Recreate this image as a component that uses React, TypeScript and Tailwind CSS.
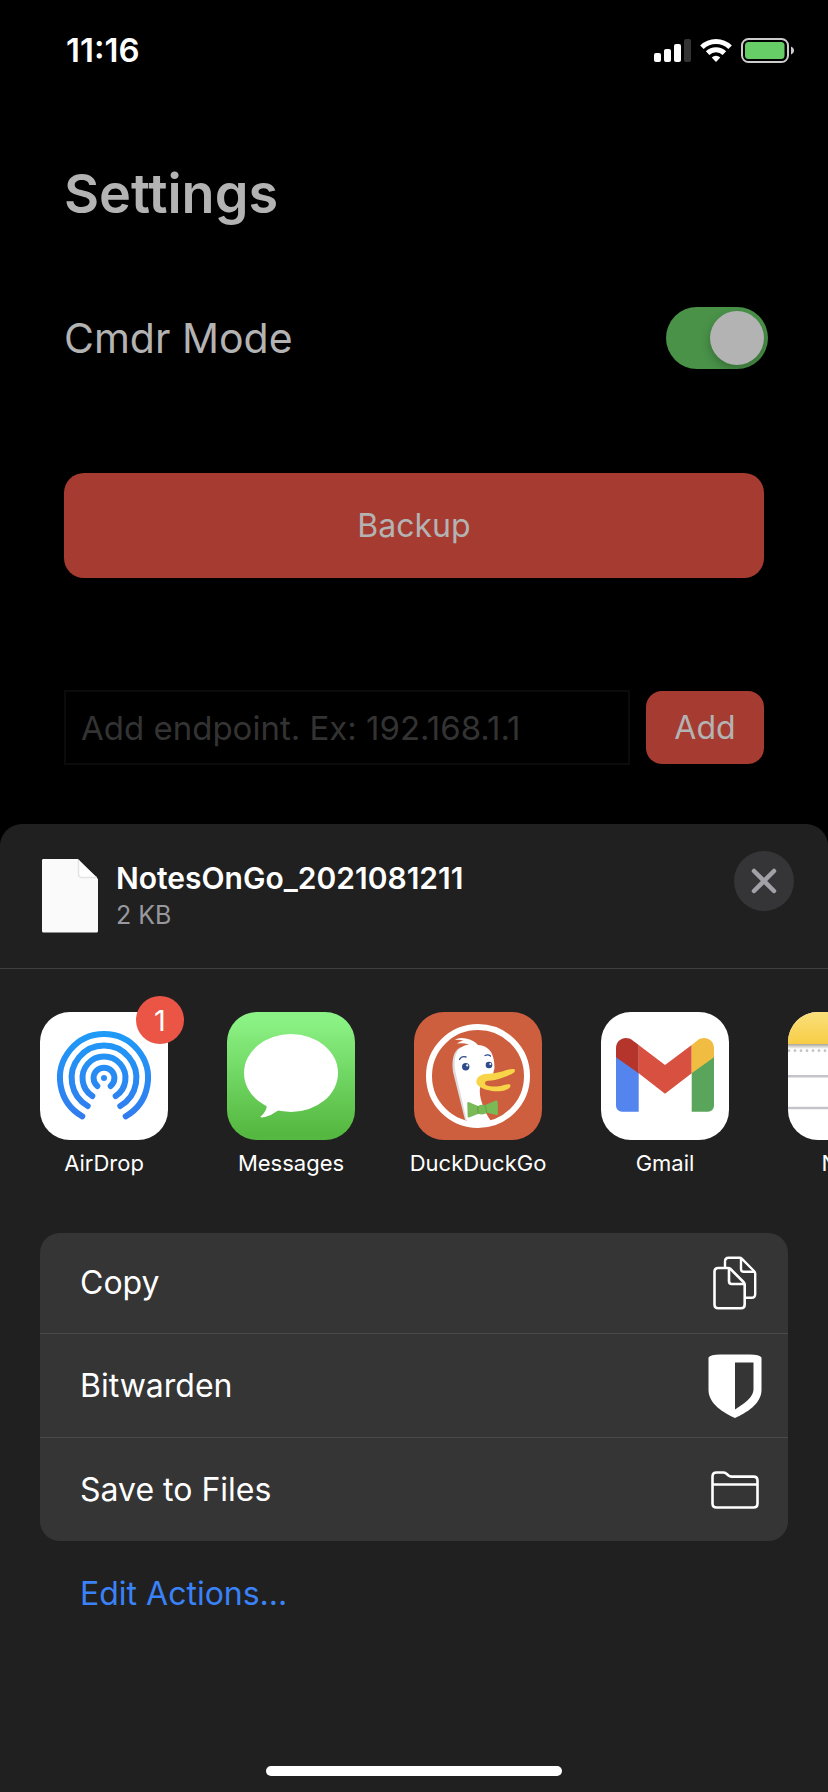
import React from "react";

function SignalIcon() {
  return (
    <svg width="37" height="23" viewBox="0 0 37 23" aria-hidden="true">
      <rect x="0" y="14" width="7" height="9" rx="2" fill="#fff" />
      <rect x="10" y="10" width="7" height="13" rx="2" fill="#fff" />
      <rect x="20" y="5" width="7" height="18" rx="2" fill="#fff" />
      <rect x="30" y="0" width="7" height="23" rx="2" fill="#333" />
    </svg>
  );
}

function WifiIcon() {
  return (
    <svg width="32" height="24" viewBox="0 0 32 24" aria-hidden="true">
      <g fill="none" stroke="#fff" strokeWidth="5">
        <path d="M1.9 9.3A20 20 0 0 1 30.1 9.3" />
        <path d="M7.6 15.1A12 12 0 0 1 24.4 15.1" />
      </g>
      <path d="M16 24L11.7 19.4A6.2 6.2 0 0 1 20.3 19.4Z" fill="#fff" />
    </svg>
  );
}

function BatteryIcon() {
  return (
    <svg width="53" height="25" viewBox="0 0 53 25" aria-hidden="true">
      <rect x="1" y="1" width="46" height="23" rx="6.5" fill="none" stroke="#ccc" strokeWidth="2" />
      <rect x="4" y="4" width="39.500" height="17" rx="3.500" fill="#67ce67" />
      <path d="M50 8.500C54 10 54 15 50 16.500Z" fill="#ccc" />
    </svg>
  );
}

function DocumentIcon() {
  return (
    <svg width="56" height="74" viewBox="0 0 56 74" aria-hidden="true">
      <path d="M2 0H36L56 20V72a1.500 1.500 0 0 1-1.500 1.500H1.500A1.500 1.500 0 0 1 0 72V1.500A1.500 1.500 0 0 1 2 0Z" fill="#fafafa" />
      <path d="M36.500 1V15Q36.500 18.500 40 18.500H55" fill="#fff" stroke="#e4e4e4" strokeWidth="1.500" />
    </svg>
  );
}

function AirDropIcon() {
  return (
    <svg className="h-full w-full" viewBox="0 0 128 128" aria-hidden="true">
      <defs>
        <linearGradient id="airdrop" gradientUnits="userSpaceOnUse" x1="0" y1="19" x2="0" y2="108">
          <stop offset="0" stopColor="#1e9bf8" />
          <stop offset="1" stopColor="#327bee" />
        </linearGradient>
      </defs>
      <rect width="128" height="128" fill="#fff" />
      <g fill="none" stroke="url(#airdrop)" strokeWidth="6" strokeLinecap="round">
        <path d="M42.300 104.300A44 44 0 1 1 85.700 104.300" />
        <path d="M47.700 94A32.400 32.400 0 1 1 80.300 94" />
        <path d="M52.300 84A21.500 21.500 0 1 1 75.700 84" />
        <path d="M57.300 74A10.400 10.400 0 1 1 70.700 74" />
      </g>
      <circle cx="64" cy="66" r="3" fill="#2a8bf3" />
    </svg>
  );
}

function MessagesIcon() {
  return (
    <svg className="h-full w-full" viewBox="0 0 128 128" aria-hidden="true">
      <defs>
        <linearGradient id="messages" x1="0" y1="0" x2="0" y2="1">
          <stop offset="0.050" stopColor="#8bf385" />
          <stop offset="0.950" stopColor="#55b840" />
        </linearGradient>
      </defs>
      <rect width="128" height="128" fill="url(#messages)" />
      <ellipse cx="64" cy="61" rx="47" ry="39" fill="#fff" />
      <path d="M38 91.500Q41 94 38.500 98.500Q36.500 102.500 33.300 104.800Q34 106 38 105Q44 103.500 50.700 98.700L58 96L44 88Z" fill="#fff" />
    </svg>
  );
}

function DuckIcon() {
  return (
    <svg className="h-full w-full" viewBox="0 0 128 128" aria-hidden="true">
      <rect width="128" height="128" fill="#cd5f3e" />
      <path d="M51 108L39 60C37.500 48 39 40 46 35.500L60 34L66 110Z" fill="#dcdcdc" />
      <path
        d="M53 110L41.500 60C39.500 49 41 41 46 36.500Q49.500 33 55 32.500Q49 30.500 43 31.500Q46 28.700 49.500 28.700Q45 27 40.700 28Q45 25 52 26.500Q60 28 64 33Q72 33 77 40Q80.500 46 80.500 56L79 62Q68 66 66 76Q65 82 68 91Q71 101 77 109Q65 115 53 110Z"
        fill="#fff"
      />
      <circle cx="64" cy="64" r="49" fill="none" stroke="#fff" strokeWidth="6" />
      <path
        d="M62.300 70C62.300 65.500 66 62.500 71 61.900C80 61.500 86 60.500 91 58.500C96 56.800 101 56 101 58.500C101 61.500 94 63.600 89 65.500C83 67.800 78 68.800 74 68.800C70.500 69 70 72.500 73 73.500C78 75.500 85 74.500 90 73C94 71.800 96.800 72 96.500 74C96 77 90 79.300 83 79.300C76 79.300 62.500 76 62.300 70Z"
        fill="#f8d548"
      />
      <circle cx="51.700" cy="54.700" r="3.700" fill="#2f4b8c" />
      <circle cx="75" cy="53" r="3.300" fill="#2f4b8c" />
      <circle cx="53.200" cy="53.400" r="1.100" fill="#fff" />
      <circle cx="76.300" cy="51.900" r="1" fill="#fff" />
      <g fill="none" stroke="#2f4b8c" strokeWidth="1.300" strokeLinecap="round">
        <path d="M45.500 47.500Q47.500 43.800 52 45" />
        <path d="M71 43.500Q74 42 76.500 44" />
      </g>
      <path
        d="M54.500 90L64 94Q67.500 92 70.700 93.300L82 88.500Q83.500 88.300 83.700 90L84 101.500Q84 103.200 82.500 103L73 100.700Q69 103.500 64.700 101.700L55 105.500Q53.700 106 53.600 104L53.300 91Q53.500 89.700 54.500 90Z"
        fill="#79ba57"
      />
      <path d="M64 94Q63 98 64.700 101.700M71 93.500Q72.500 97 72.500 100.700" fill="none" stroke="#5f9f42" strokeWidth="1" />
    </svg>
  );
}

function GmailIcon() {
  return (
    <svg className="h-full w-full" viewBox="0 0 128 128" aria-hidden="true">
      <rect width="128" height="128" fill="#fff" />
      <path d="M15 44L37.700 60V99.700H21A6 6 0 0 1 15 93.700Z" fill="#5484ed" />
      <path d="M113 44L90.700 60V99.700H107A6 6 0 0 0 113 93.700Z" fill="#5aa55c" />
      <path d="M37.700 33L64 53L90.700 33V61.300L64 81.700L37.700 61.300Z" fill="#d85040" />
      <path d="M15 45.300V36.500C15 27.500 24.500 23 31.700 28.500L37.700 33V61.300Z" fill="#b5342b" />
      <path d="M113 45.300V36.500C113 27.500 103.500 23 96.300 28.500L90.700 33V61.300Z" fill="#f0bd42" />
    </svg>
  );
}

function NotesIcon() {
  return (
    <svg className="h-full w-full" viewBox="0 0 128 128" aria-hidden="true">
      <defs>
        <linearGradient id="notes" x1="0" y1="0" x2="0" y2="1">
          <stop offset="0" stopColor="#fae07c" />
          <stop offset="1" stopColor="#f7cd45" />
        </linearGradient>
        <linearGradient id="notes-edge" x1="0" y1="0" x2="0" y2="1">
          <stop offset="0" stopColor="#a9a59b" />
          <stop offset="1" stopColor="#fff" />
        </linearGradient>
      </defs>
      <rect width="128" height="128" fill="#fff" />
      <rect width="128" height="32" fill="url(#notes)" />
      <rect y="32" width="128" height="5" fill="url(#notes-edge)" />
      <path d="M1 38.700H128" stroke="#c3c3c3" strokeWidth="2.800" strokeLinecap="round" strokeDasharray="0 6" />
      <path d="M0 64.300H128M0 96H128" stroke="#c5c4c9" strokeWidth="2.400" />
    </svg>
  );
}

function CopyIcon() {
  return (
    <svg width="44" height="54" viewBox="0 0 44 54" fill="none" stroke="#fff" strokeWidth="2.600" strokeLinejoin="round" aria-hidden="true">
      <path d="M12 11V5.500Q12 1.800 15.700 1.800H26.500Q28 1.800 29 2.800L41 15Q42.200 16.200 42.200 17.500V38Q42.200 41.800 38.500 41.800H33" strokeWidth="2.400" />
      <path d="M28 2.500V13Q28 15.800 30.800 15.800H41.500" strokeWidth="2.400" />
      <path d="M5.300 12H15Q16.500 12 17.500 13L30.500 26Q31.700 27.200 31.700 28.500V48.500Q31.700 52.300 28 52.300H5.300Q1.500 52.300 1.500 48.500V15.800Q1.500 12 5.300 12Z" />
      <path d="M16 12.500V25.300Q16 28 18.700 28H31" />
    </svg>
  );
}

function ShieldIcon() {
  return (
    <svg width="54" height="64" viewBox="0 0 54 64" aria-hidden="true">
      <path
        fillRule="evenodd"
        fill="#fff"
        d="M0.500 3.500Q2.500 0.500 12 0.500H42Q51.500 0.500 53.500 3.500V36C53.500 50 38 59 27 64C16 59 0.500 50 0.500 36ZM27 8.500V55.500C36 50 45.500 43 45.500 35.500V8.500Z"
      />
    </svg>
  );
}

function FolderIcon() {
  return (
    <svg width="48" height="38" viewBox="0 0 48 38" fill="none" stroke="#fff" strokeWidth="2.600" strokeLinejoin="round" aria-hidden="true">
      <path d="M1.500 32.500V5.500Q1.500 1.500 5.500 1.500H12Q14 1.500 15.500 2.700L17.500 4.500Q18.800 5.600 20.500 5.600H42.500Q46.500 5.600 46.500 9.600V32.500Q46.500 36.500 42.500 36.500H5.500Q1.500 36.500 1.500 32.500Z" />
      <path d="M2 13.500H46" strokeWidth="2.400" />
    </svg>
  );
}

type Target = { name: string; icon: React.ReactNode; badge?: number };

const targets: Target[] = [
  { name: "AirDrop", icon: <AirDropIcon />, badge: 1 },
  { name: "Messages", icon: <MessagesIcon /> },
  { name: "DuckDuckGo", icon: <DuckIcon /> },
  { name: "Gmail", icon: <GmailIcon /> },
  { name: "Notes", icon: <NotesIcon /> },
];

const actions = [
  { name: "Copy", icon: <CopyIcon /> },
  { name: "Bitwarden", icon: <ShieldIcon /> },
  { name: "Save to Files", icon: <FolderIcon /> },
];

function StatusBar() {
  return (
    <div className="flex h-[100px] items-center justify-between pr-[34px] pl-[66px]">
      <time className="text-[33px] leading-10 font-semibold">11:16</time>
      <div className="flex items-center gap-[9px]">
        <SignalIcon />
        <WifiIcon />
        <BatteryIcon />
      </div>
    </div>
  );
}

function SettingsScreen() {
  return (
    <main className="px-16 text-[#b3b3b3]">
      <h1 className="pt-[54px] text-[54px] leading-20 font-semibold">Settings</h1>
      <div className="-mr-1 flex items-center justify-between pt-[72px]">
        <label htmlFor="cmdr" className="text-[41px] leading-16">
          Cmdr Mode
        </label>
        <input
          id="cmdr"
          type="checkbox"
          role="switch"
          defaultChecked
          className="flex h-[62px] w-[102px] appearance-none items-center rounded-full bg-[#3a3a3c] p-1 before:size-[54px] before:rounded-full before:bg-[#b3b3b3] before:shadow-[0_4px_10px_rgba(0,0,0,0.25)] checked:justify-end checked:bg-[#499248]"
        />
      </div>
      <button type="button" className="mt-[103px] h-[105px] w-full rounded-[20px] bg-[#a63c31] text-[32px]">
        Backup
      </button>
      <form className="mt-28 flex items-center gap-4" onSubmit={(e) => e.preventDefault()}>
        <input
          type="text"
          aria-label="Endpoint address"
          placeholder="Add endpoint. Ex: 192.168.1.1"
          className="h-[75px] min-w-0 flex-1 border-2 border-[#0b0b0b] bg-black px-[15px] text-[33px] placeholder:text-[#333] placeholder:opacity-100"
        />
        <button type="submit" className="h-[73px] w-[118px] rounded-2xl bg-[#a63c31] text-[32px]">
          Add
        </button>
      </form>
    </main>
  );
}

function ShareSheet() {
  return (
    <section aria-label="Share" className="mt-[59px] flex flex-1 flex-col rounded-t-[22px] bg-[#202020]">
      <header className="flex h-[145px] items-start border-b border-[#404042] pr-[34px] pl-[42px]">
        <div className="mt-[35px]">
          <DocumentIcon />
        </div>
        <div className="mt-8 ml-[18px] flex-1">
          <h2 className="text-[30px] leading-11 font-semibold">NotesOnGo_2021081211</h2>
          <p className="text-[25px] leading-[30px] text-[#98989e]">2 KB</p>
        </div>
        <button type="button" aria-label="Close" className="mt-[27px] grid size-[60px] place-items-center rounded-full bg-[#353538]">
          <svg width="26" height="26" viewBox="0 0 26 26" aria-hidden="true">
            <path d="M3 3L23 23M23 3L3 23" stroke="#a2a1a8" strokeWidth="4.500" strokeLinecap="round" />
          </svg>
        </button>
      </header>

      <div className="flex gap-[59px] overflow-hidden pt-[43px] pl-10">
        {targets.map((t) => (
          <button key={t.name} type="button" className="relative flex w-32 shrink-0 flex-col items-center">
            <span className="block size-32 overflow-hidden rounded-[30px]">{t.icon}</span>
            {t.badge && (
              <span className="absolute -top-4 -right-4 grid size-12 place-items-center rounded-full bg-[#ea5545] text-[29px] leading-none">
                {t.badge}
              </span>
            )}
            <span className="mt-2 text-[22px] leading-[30px] whitespace-nowrap">{t.name}</span>
          </button>
        ))}
      </div>

      <ul className="mx-10 mt-[55px] divide-y divide-[#4a4a4a] overflow-hidden rounded-[20px] bg-[#353535]">
        {actions.map((a) => (
          <li key={a.name} className="group">
            <button
              type="button"
              className="flex h-[103px] w-full items-center justify-between pr-[25px] pl-10 text-left text-[32px] group-first:h-[100px]"
            >
              {a.name}
              <span className="grid w-14 place-items-center">{a.icon}</span>
            </button>
          </li>
        ))}
      </ul>

      <button type="button" className="mt-7 ml-20 self-start text-[32px] leading-[50px] text-[#3a82f7]">
        Edit Actions...
      </button>

      <div className="mx-auto mt-auto mb-4 h-[10px] w-[296px] rounded-full bg-white" />
    </section>
  );
}

export default function App() {
  return (
    <div className="flex min-h-screen flex-col bg-black font-['Inter','Liberation_Sans',sans-serif] text-white">
      <StatusBar />
      <SettingsScreen />
      <ShareSheet />
    </div>
  );
}
